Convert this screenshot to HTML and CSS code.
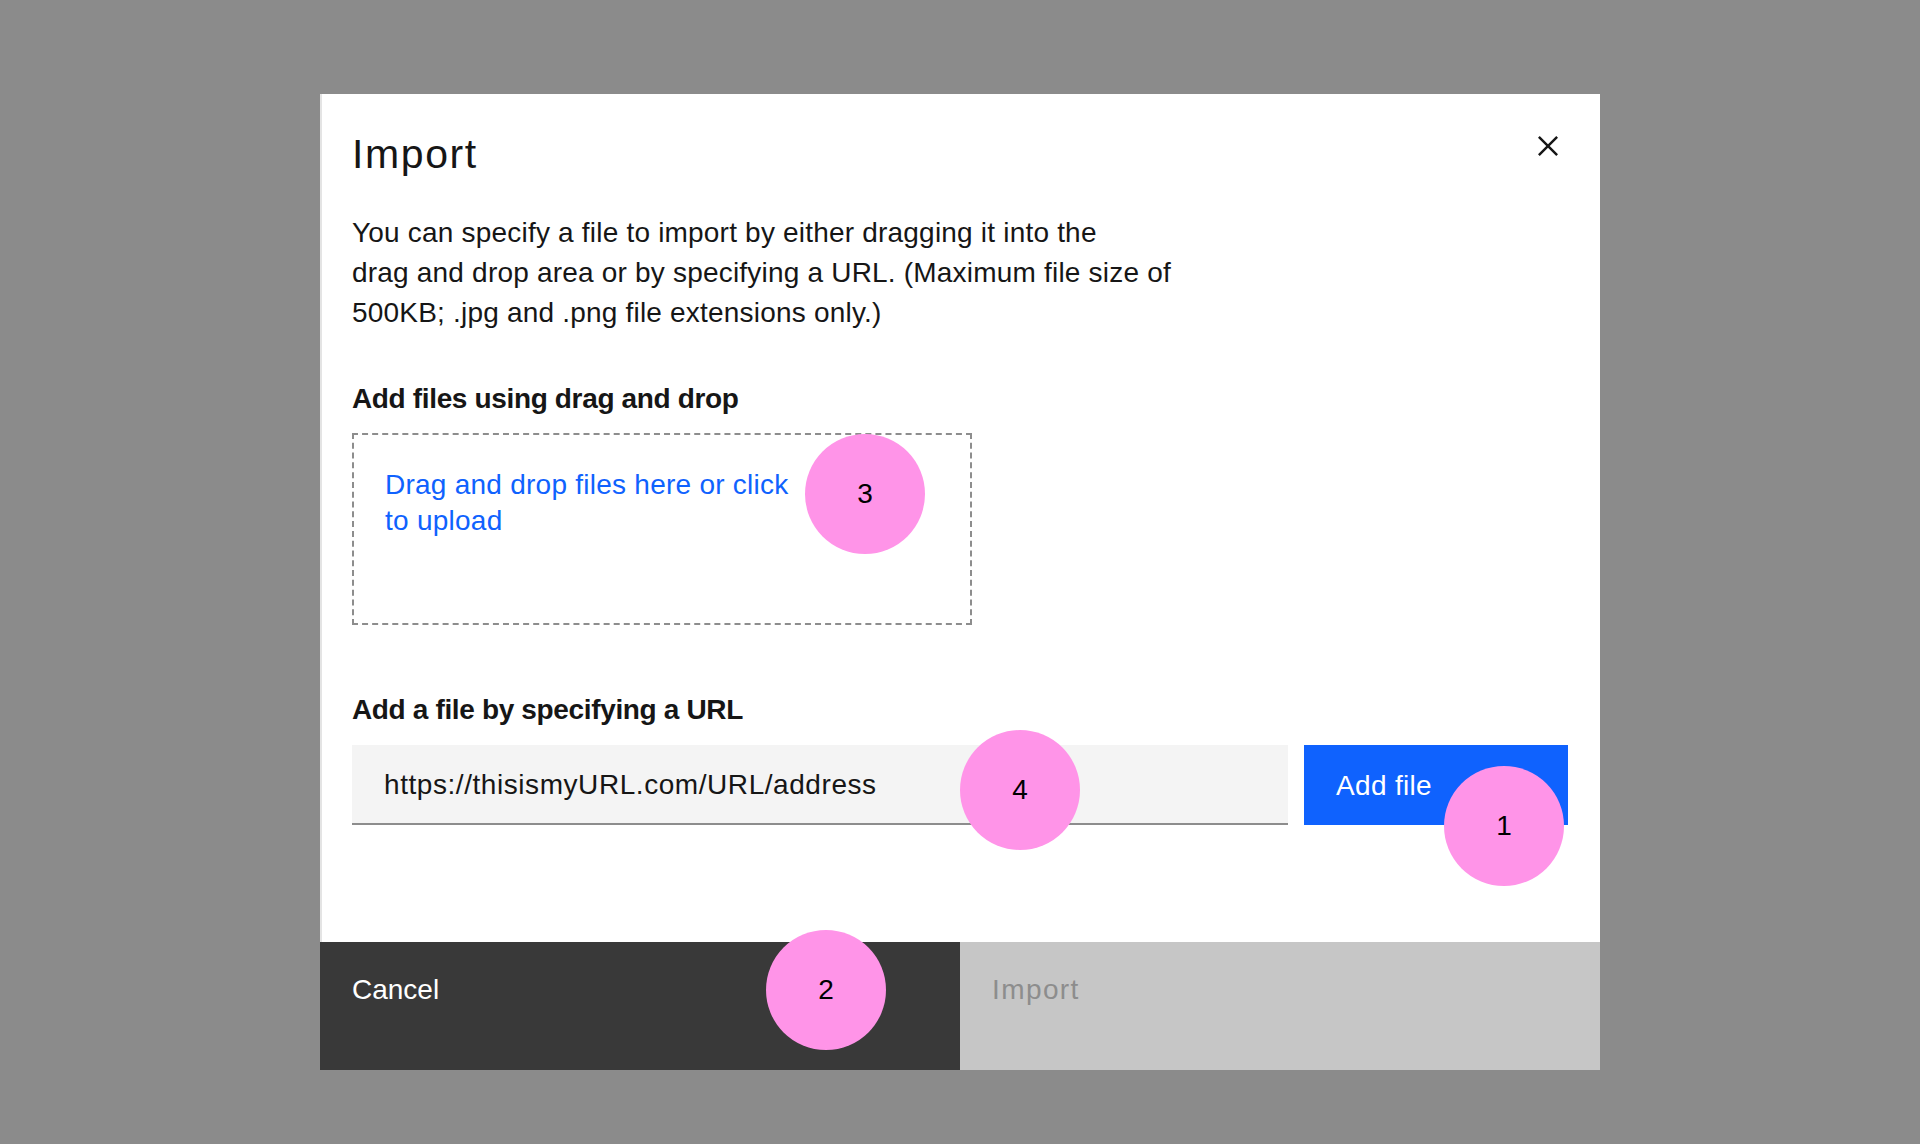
FILE: index.html
```html
<!DOCTYPE html>
<html lang="en">
<head>
<meta charset="utf-8">
<title>Import</title>
<link rel="stylesheet" href="styles.css">
</head>
<body class="page">
  <div class="modal" role="dialog" aria-labelledby="modal-title">
    <div class="modal-body">
      <header class="modal-header">
        <h2 class="modal-title" id="modal-title">Import</h2>
        <button class="modal-close" type="button" aria-label="Close">
          <svg class="close-icon" viewBox="8 8 16 16" width="20" height="20" aria-hidden="true">
            <path d="M24 9.4L22.6 8 16 14.6 9.4 8 8 9.4 14.6 16 8 22.6 9.4 24 16 17.4 22.6 24 24 22.6 17.4 16 24 9.4z"/>
          </svg>
        </button>
      </header>
      <div class="modal-content">
        <p class="modal-text">You can specify a file to import by either dragging it into the<br>drag and drop area or by specifying a URL. (Maximum file size of<br>500KB; .jpg and .png file extensions only.)</p>

        <p class="section-label section-label--drop">Add files using drag and drop</p>
        <div class="drop-zone">
          <span class="drop-text">Drag and drop files here or click to upload</span>
          <span class="badge badge--drop">3</span>
        </div>

        <p class="section-label section-label--url">Add a file by specifying a URL</p>
        <div class="url-row">
          <div class="url-field">
            <input class="url-input" type="text" value="https://thisismyURL.com/URL/address" aria-label="File URL">
            <span class="badge badge--url">4</span>
          </div>
          <button class="btn-add" type="button">Add file<span class="badge badge--add">1</span></button>
        </div>
      </div>
    </div>
    <footer class="modal-footer">
      <button class="footer-btn footer-btn--cancel" type="button">Cancel<span class="badge badge--cancel">2</span></button>
      <button class="footer-btn footer-btn--import" type="button" disabled>Import</button>
    </footer>
  </div>
</body>
</html>
```

FILE: styles.css
```css
* {
  box-sizing: border-box;
}

html, body {
  margin: 0;
  padding: 0;
}

.page {
  min-height: 1144px;
  background: #8b8b8b;
  display: flex;
  justify-content: center;
  align-items: flex-start;
  padding-top: 94px;
  font-family: "Liberation Sans", Arial, sans-serif;
  color: #161616;
}

.modal {
  width: 1280px;
  height: 976px;
  background: #ffffff;
  display: flex;
  flex-direction: column;
}

.modal-body {
  flex: 1;
  border-left: 2px solid #e4e4e4;
  padding: 32px 32px 0 30px;
}

.modal-header {
  position: relative;
}

.modal-title {
  margin: 0;
  font-size: 41px;
  line-height: 56px;
  font-weight: 400;
  letter-spacing: 1.6px;
  color: #161616;
}

.modal-close {
  position: absolute;
  top: 10px;
  right: 10px;
  width: 20px;
  height: 20px;
  padding: 0;
  border: 0;
  background: transparent;
  display: flex;
  align-items: center;
  justify-content: center;
  cursor: pointer;
}

.close-icon {
  display: block;
  fill: #161616;
}

.modal-content {
  display: flex;
  flex-direction: column;
}

.modal-text {
  margin: 31px 0 0;
  font-size: 28px;
  line-height: 40px;
  letter-spacing: 0.2px;
  color: #161616;
}

.section-label {
  margin: 0;
  font-size: 28px;
  line-height: 36px;
  font-weight: 700;
  letter-spacing: -0.35px;
  color: #161616;
}

.section-label--drop {
  margin-top: 48px;
}

.section-label--url {
  margin-top: 67px;
}

.drop-zone {
  position: relative;
  margin-top: 16px;
  width: 620px;
  height: 192px;
  border: 2px dashed #8d8d8d;
  padding: 32px 32px 32px 31px;
}

.drop-text {
  display: block;
  max-width: 420px;
  font-size: 28px;
  line-height: 36px;
  letter-spacing: 0.25px;
  color: #0f62fe;
}

.url-row {
  margin-top: 17px;
  display: flex;
  gap: 16px;
}

.url-field {
  position: relative;
  flex: 1;
}

.url-input {
  display: block;
  width: 100%;
  height: 80px;
  margin: 0;
  padding: 2px 32px 0;
  border: 0;
  border-bottom: 2px solid #8d8d8d;
  border-radius: 0;
  background: #f4f4f4;
  font-family: "Liberation Sans", Arial, sans-serif;
  font-size: 28px;
  letter-spacing: 0.56px;
  color: #161616;
  outline: none;
}

.btn-add {
  position: relative;
  width: 264px;
  height: 80px;
  margin: 0;
  padding: 2px 32px 0;
  border: 0;
  border-radius: 0;
  background: #0f62fe;
  color: #ffffff;
  font-family: "Liberation Sans", Arial, sans-serif;
  font-size: 28px;
  line-height: 36px;
  letter-spacing: 0.32px;
  text-align: left;
  display: flex;
  align-items: center;
}

.modal-footer {
  display: flex;
  height: 128px;
}

.footer-btn {
  position: relative;
  flex: 1;
  margin: 0;
  padding: 30px 32px 0;
  border: 0;
  border-radius: 0;
  font-family: "Liberation Sans", Arial, sans-serif;
  font-size: 28px;
  line-height: 36px;
  letter-spacing: 0.32px;
  text-align: left;
  display: flex;
  align-items: flex-start;
}

.footer-btn--cancel {
  background: #393939;
  color: #ffffff;
  letter-spacing: 0;
}

.footer-btn--import {
  background: #c6c6c6;
  color: #8d8d8d;
  letter-spacing: 1.4px;
}

.badge {
  position: absolute;
  z-index: 2;
  width: 120px;
  height: 120px;
  border-radius: 50%;
  background: #ff94e8;
  color: #000000;
  font-family: "Liberation Sans", Arial, sans-serif;
  font-size: 28px;
  line-height: 1;
  letter-spacing: 0;
  display: flex;
  align-items: center;
  justify-content: center;
}

.badge--drop {
  left: 451px;
  top: -1px;
}

.badge--url {
  left: 608px;
  top: -15px;
}

.badge--add {
  left: 140px;
  top: 21px;
}

.badge--cancel {
  left: 446px;
  top: -12px;
}
```
